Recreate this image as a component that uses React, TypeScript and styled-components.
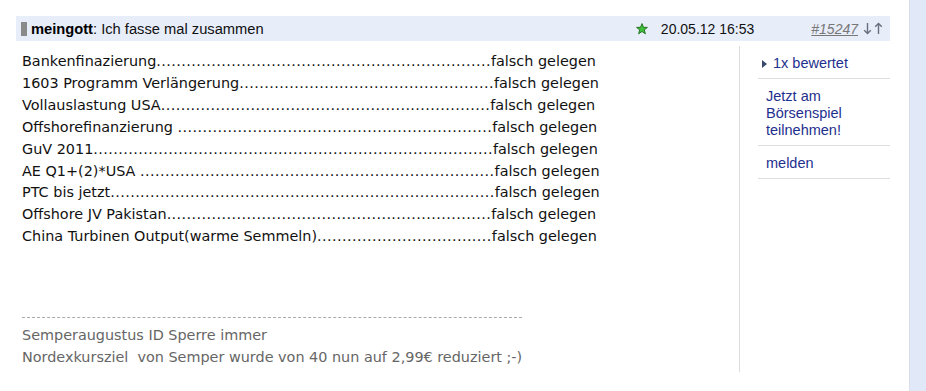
import React from "react";
import styled, { createGlobalStyle } from "styled-components";

const GlobalStyle = createGlobalStyle`
    html, body {
        margin: 0;
        padding: 0;
        background: #fff;
    }
`;

const ARIAL = `"Liberation Sans", Arial, sans-serif`;
const VERDANA = `"DejaVu Sans", Verdana, sans-serif`;

const Page = styled.div`
    display: grid;
    grid-template-columns: 1fr 17px;
    height: 100vh;
    min-height: 391px;
`;

const Main = styled.div`
    padding: 16px 0 0 16px;
`;

const Strip = styled.div`
    background: #e1e9f9;
    border-left: 1px solid #d9dfea;
`;

const Header = styled.div`
    display: flex;
    align-items: center;
    width: 874px;
    height: 25px;
    box-sizing: border-box;
    padding: 0 7px 0 5px;
    background: #e7edf9;
    font-family: ${ARIAL};
    font-size: 14.7px;
    color: #111;
`;

const Marker = styled.span`
    width: 6px;
    height: 14px;
    background: #8a8a8a;
    margin-right: 4px;
`;

const Author = styled.b`
    font-weight: bold;
    color: #000;
`;

const Title = styled.span`
    flex: 1;
`;

const DateText = styled.span`
    margin-left: 13px;
    font-size: 14px;
`;

const PostLink = styled.a`
    margin-left: 57px;
    color: #777;
    font-style: italic;
    font-size: 14px;
    text-decoration: underline;
`;

const Arrows = styled.span`
    display: flex;
    gap: 2px;
    margin-left: 5px;
`;

const Body = styled.div`
    display: flex;
    margin-top: 5px;
    width: 874px;
`;

const Content = styled.div`
    width: 717px;
    padding: 5px 0 4px 6px;
    border-right: 1px solid #dcdcdc;
    font-family: ${VERDANA};
    font-size: 14.4px;
    line-height: 21.9px;
    color: #111;
`;

const Line = styled.div`
    white-space: pre;
`;

const Leader = styled.span`
    letter-spacing: 0.42px;
`;

const Separator = styled.div`
    width: 500px;
    margin-top: 69px;
    border-top: 1px dashed #aaa;
    padding-top: 6px;
`;

const Signature = styled.div`
    color: #666;
    line-height: 22px;
    white-space: pre;
`;

const Sidebar = styled.div`
    margin-left: 18px;
    width: 132px;
    font-family: ${ARIAL};
    font-size: 14.5px;
    line-height: 17px;
    color: #1e2f8e;
`;

const SideItem = styled.div<{ $indent: number }>`
    display: flex;
    align-items: center;
    padding: 9px 0 6px ${({ $indent }) => $indent}px;
    border-bottom: 1px solid #dedede;
`;

const Arrow = styled.span`
    width: 0;
    height: 0;
    border-top: 4px solid transparent;
    border-bottom: 4px solid transparent;
    border-left: 5px solid #3a4a6a;
    margin-right: 6px;
`;

const rows: [string, number][] = [
    ["Bankenfinazierung", 67],
    ["1603 Programm Verlängerung", 51],
    ["Vollauslastung USA", 66],
    ["Offshorefinanzierung ", 63],
    ["GuV 2011", 80],
    ["AE Q1+(2)*USA ", 71],
    ["PTC bis jetzt", 77],
    ["Offshore JV Pakistan", 65],
    ["China Turbinen Output(warme Semmeln)", 35],
];

const Star = () => (
    <svg width="12" height="12" viewBox="0 0 12 12">
        <polygon
            points="6,0.6 7.5,4.3 11.4,4.4 8.3,6.9 9.4,10.8 6,8.5 2.6,10.8 3.7,6.9 0.6,4.4 4.5,4.3"
            fill="#3fbf3a"
            stroke="#1d6b1b"
            strokeWidth="0.9"
        />
    </svg>
);

const SortArrow = ({ up }: { up?: boolean }) => (
    <svg width="9" height="13" viewBox="0 0 9 13">
        <path
            d={up ? "M4.5 12V1.5M1.2 4.8L4.5 1.5L7.8 4.8" : "M4.5 1V11.5M1.2 8.2L4.5 11.5L7.8 8.2"}
            fill="none"
            stroke="#6a6f80"
            strokeWidth="1.4"
        />
    </svg>
);

const App = () => {
    return (
        <Page>
            <GlobalStyle />
            <Main>
                <Header>
                    <Marker />
                    <Title>
                        <Author>meingott</Author>: Ich fasse mal zusammen
                    </Title>
                    <Star />
                    <DateText>20.05.12 16:53</DateText>
                    <PostLink>#15247</PostLink>
                    <Arrows>
                        <SortArrow />
                        <SortArrow up />
                    </Arrows>
                </Header>
                <Body>
                    <Content>
                        {rows.map(([label, dots]) => (
                            <Line key={label}>
                                {label}
                                <Leader>{".".repeat(dots)}</Leader>
                                falsch gelegen
                            </Line>
                        ))}
                        <Separator />
                        <Signature>Semperaugustus ID Sperre immer</Signature>
                        <Signature>Nordexkursziel  von Semper wurde von 40 nun auf 2,99€ reduziert ;-)</Signature>
                    </Content>
                    <Sidebar>
                        <SideItem $indent={4}>
                            <Arrow />
                            1x bewertet
                        </SideItem>
                        <SideItem $indent={8}>
                            Jetzt am
                            <br />
                            Börsenspiel
                            <br />
                            teilnehmen!
                        </SideItem>
                        <SideItem $indent={8}>melden</SideItem>
                    </Sidebar>
                </Body>
            </Main>
            <Strip />
        </Page>
    );
};

export default App;
